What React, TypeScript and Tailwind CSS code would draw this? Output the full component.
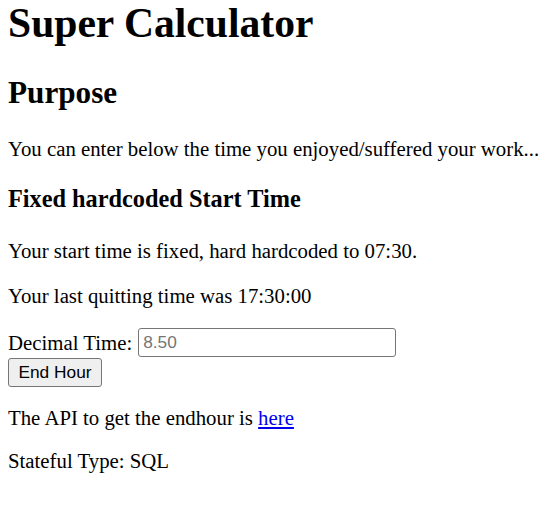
import React, { useState } from 'react';

export default function App() {
  const [decimal, setDecimal] = useState<string>('');

  return (
    <div className="min-h-screen bg-white px-[8px] pt-0 font-['Liberation_Serif',serif] text-black">
      <h1 className="m-0 text-[41.6px] leading-[47px] font-bold">Super Calculator</h1>

      <h2 className="mt-[28px] text-[31.2px] leading-[36px] font-bold">Purpose</h2>
      <p className="mt-[26px] text-[20.8px] leading-[24px]">
        You can enter below the time you enjoyed/suffered your work...
      </p>

      <h3 className="mt-[24px] text-[24.3px] leading-[28px] font-bold">Fixed hardcoded Start Time</h3>
      <p className="mt-[26px] text-[20.8px] leading-[24px]">Your start time is fixed, hard hardcoded to 07:30.</p>
      <p className="mt-[21px] text-[20.8px] leading-[24px]">Your last quitting time was 17:30:00</p>

      <form className="mt-[20px]" onSubmit={(e) => e.preventDefault()}>
        <div className="flex items-center gap-[6px] text-[20.8px] leading-[24px]">
          <label htmlFor="decimal">Decimal Time:</label>
          <input
            id="decimal"
            type="text"
            value={decimal}
            onChange={(e) => setDecimal(e.target.value)}
            placeholder="8.50"
            className="h-[29px] w-[258px] rounded-[3px] border border-[#767676] bg-white px-[4px] font-['Liberation_Sans',sans-serif] text-[17.3px] text-black placeholder-[#757575] outline-none"
          />
        </div>
        <button
          type="submit"
          className="mt-[1px] block h-[29px] w-[94px] rounded-[3px] border border-[#767676] bg-[#efefef] font-['Liberation_Sans',sans-serif] text-[17.3px] text-black"
        >
          End Hour
        </button>
      </form>

      <p className="mt-[19px] text-[20.8px] leading-[24px]">
        The API to get the endhour is{' '}
        <a href="#" className="text-[#0000ee] underline">
          here
        </a>
      </p>
      <p className="mt-[19px] text-[20.8px] leading-[24px]">Stateful Type: SQL</p>
    </div>
  );
}
